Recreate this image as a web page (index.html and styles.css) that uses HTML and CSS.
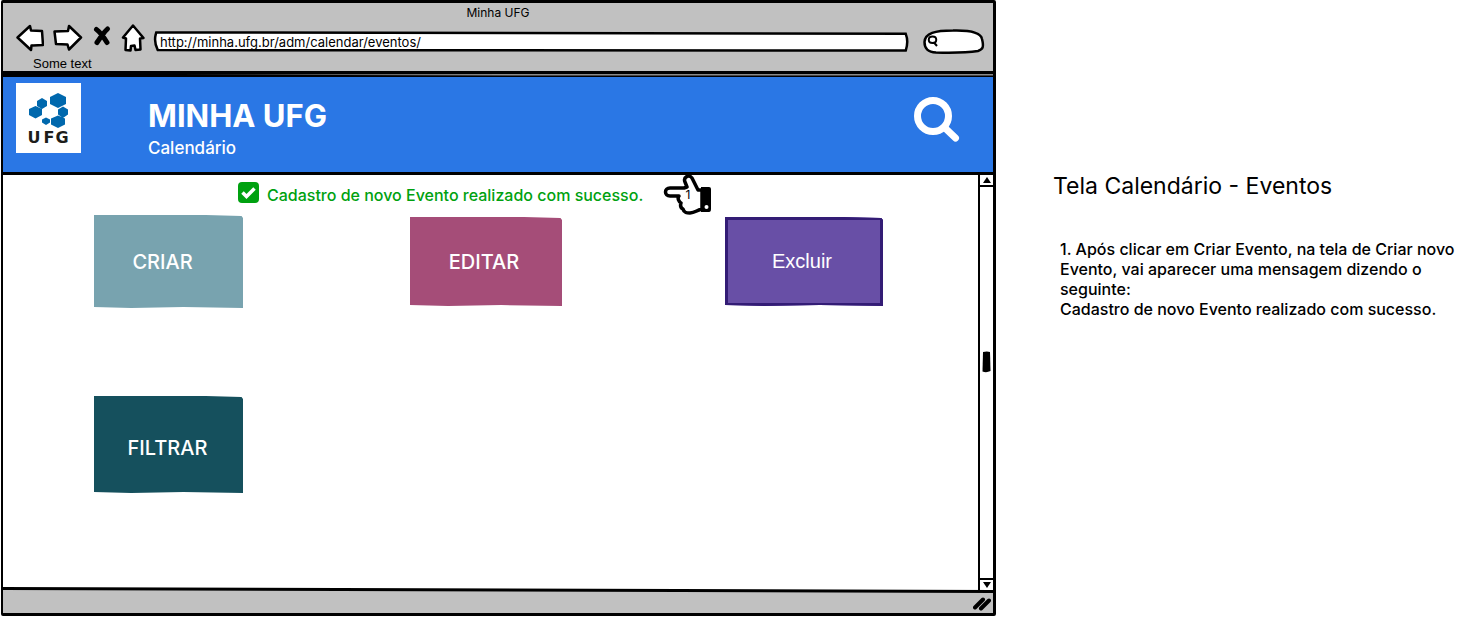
FILE: index.html
```html
<!DOCTYPE html>
<html lang="pt-BR">
<head>
<meta charset="utf-8">
<meta name="viewport" content="width=device-width, initial-scale=1">
<title>Minha UFG</title>
<link rel="stylesheet" href="styles.css">
</head>
<body>
<div class="page">
  <div class="browser">
    <div class="chrome">
      <div class="window-title">Minha UFG</div>
      <div class="toolbar">
        <div class="nav">
          <button class="nav-btn" aria-label="Voltar"><svg width="28" height="28" viewBox="0 0 28 28"><path d="M1.500 13.500 14 2l1 4.500 11 .500 1 14-11.500.500-.500 4.500z"/></svg></button>
          <button class="nav-btn" aria-label="Avançar"><svg width="30" height="28" viewBox="0 0 30 28"><path d="M1.500 7.500 15 7l1-5 12 11.500-12 12-1.500-5L3 20z"/></svg></button>
          <button class="nav-btn" aria-label="Parar"><svg class="cross" width="20" height="28" viewBox="0 0 20 28"><path d="M4.500 5.500c3 2 8 9 10.500 13M15.500 5C11 9 9 13 5 18.500"/></svg></button>
          <button class="nav-btn" aria-label="Início"><svg width="24" height="28" viewBox="0 0 24 28"><path d="M12 1.500 2 13.500l3 1-.500 11.500 5 .500.500-4.500 3.500-.500 1 4.500 5-.500-.500-11 3.500-.500z"/></svg></button>
        </div>
        <div class="address">
          <svg class="outline" viewBox="0 0 100 22" preserveAspectRatio="none" aria-hidden="true"><path d="M.300 1.500 99.700 3 Q100.100 11 99.700 20.500L.500 20Q-.100 11 .300 1.500z"/></svg>
          <input type="text" aria-label="Endereço" value="http://minha.ufg.br/adm/calendar/eventos/">
        </div>
        <div class="finder">
          <svg class="outline" viewBox="0 0 62 25" preserveAspectRatio="none" aria-hidden="true"><path d="M1.500 13C2 4 12 1.500 30 1.500 50 1 58 4 59 10 61 18 60 20.500 55 22 42 24 32 24 13 23.500 5 23 1.500 20 1.500 13z"/></svg>
          <svg class="lens" width="12" height="12" viewBox="0 0 12 12" aria-hidden="true"><path d="M5.500 1.500c-5 0-5 6.500 0 6.500s5-6.500 0-6.500M7 7.500l3 3.500"/></svg>
          <input type="search" aria-label="Pesquisar">
        </div>
      </div>
      <div class="bookmarks">Some text</div>
    </div>
    <svg class="rule" viewBox="0 0 990 6" preserveAspectRatio="none" aria-hidden="true"><path d="M0 0H990V6H0z"/><path class="gap" d="M175 3.500 550 3H990V4.500H550z"/></svg>
    <header class="banner">
      <svg class="logo" width="65" height="70" viewBox="0 0 65 70" role="img" aria-label="UFG">
        <path fill="#fff" d="M0 0h65v70H0z"/>
        <g fill="#0068ad"><path d="m42 10 8 4v7l-8 4-8-4v-7zM26 15l5 3v5l-5 3-5-3v-5zM19.500 23l6.500 3v6l-6.500 3.500-6.500-3.500v-6zM47 23.500l5 3v5L47 35l-5-3.500v-5zM42 32.500l7 3v6L42 45l-7-3.500v-6zM30 34.500l4 2v3L30 42l-4-2.500v-3z"/></g>
        <g text-anchor="middle"><text x="18" y="60">U</text><text x="33" y="60">F</text><text x="46" y="60">G</text></g>
      </svg>
      <div class="heading">
        <h1>MINHA UFG</h1>
        <p>Calendário</p>
      </div>
      <button class="search" aria-label="Buscar"><svg width="46" height="46" viewBox="0 0 46 46"><circle cx="19" cy="19" r="15.500"/><path d="m31 31 10.500 10"/></svg></button>
    </header>
    <div class="viewport">
      <main class="content">
        <div class="status" role="status">
          <svg class="check" width="21" height="21" viewBox="0 0 21 21" aria-hidden="true"><rect width="21" height="21" rx="4" fill="#00a110"/><path d="m4.500 10.500 4 4 8-8" fill="none" stroke="#fff" stroke-width="3.500"/></svg>
          <span class="message">Cadastro de novo Evento realizado com sucesso.</span>
          <span class="hand">
            <svg width="50" height="42" viewBox="0 0 50 42" aria-hidden="true"><path class="palm" d="M21 14H7c-6 0-6 8 0 8h9c-2 2 0 6 2 7-1 3 0 5 2 6 1 4 4 4 7 4 5 0 7-3 12-4V16h-4L29 4c-3-4-9-1-7 4l2 5z"/><path d="M38 13h8q2 0 2 2v20q0 3-2 3h-8z"/><circle cx="43.500" cy="33" r="2" fill="#fff"/></svg>
            <span class="step">1</span>
          </span>
        </div>
        <div class="actions">
          <button class="tile create">CRIAR</button>
          <button class="tile edit">EDITAR</button>
          <button class="tile delete">Excluir</button>
          <button class="tile filter">FILTRAR</button>
        </div>
      </main>
      <div class="scrollbar">
        <button class="step-btn up" aria-label="Rolar para cima"><svg width="8" height="6" viewBox="0 0 8 6"><path d="M4 0 8 6H0z"/></svg></button>
        <div class="track"><svg width="9" height="22" viewBox="0 0 9 22"><path d="M1 1q4-1 7 0l.500 19q-4 2-8 .500z"/></svg></div>
        <button class="step-btn down" aria-label="Rolar para baixo"><svg width="8" height="6" viewBox="0 0 8 6"><path d="M0 0h8L4 6z"/></svg></button>
      </div>
    </div>
    <footer class="statusbar">
      <svg class="slope" viewBox="0 0 990 6" preserveAspectRatio="none" aria-hidden="true"><path fill="#fff" d="M0 0h990v4L0 1z"/><path d="M0 0 990 3v3L0 3z"/></svg>
      <svg class="grip" width="18" height="14" viewBox="0 0 18 14" aria-hidden="true"><path d="M2 10.500 10 2.500M8 11.500l8-8"/></svg>
    </footer>
  </div>
  <aside class="notes">
    <h2>Tela Calendário - Eventos</h2>
    <p>1. Após clicar em Criar Evento, na tela de Criar novo<br>Evento, vai aparecer uma mensagem dizendo o<br>seguinte:<br>Cadastro de novo Evento realizado com sucesso.</p>
  </aside>
</div>
</body>
</html>
```
FILE: styles.css
```css
* { box-sizing: border-box; }
body {
  margin: 0;
  background: #fff;
  color: #000;
  font-family: Inter, "Liberation Sans", sans-serif;
  font-size: 16px;
}
h1, h2, p { margin: 0; }
svg { display: block; flex: none; }
button {
  padding: 0;
  border: 0;
  background: none;
  color: inherit;
  font: inherit;
}
.page {
  display: grid;
  grid-template-columns: 996fr 477fr;
  min-height: 100vh;
}
.browser {
  display: flex;
  flex-direction: column;
  margin: 0 0 1px 1px;
  border: 3px solid #000;
  border-left-width: 2px;
  border-radius: 2px;
}
.chrome { background: #c1c1c1; }
.window-title {
  font-size: 12px;
  line-height: 20px;
  text-align: center;
}
.toolbar {
  display: flex;
  align-items: center;
  height: 30px;
  padding: 0 8px 0 13px;
}
.nav {
  display: flex;
  align-items: center;
  gap: 9px;
  margin-right: 9px;
}
.nav-btn path {
  fill: #fff;
  stroke: #000;
  stroke-width: 2.5;
  stroke-linejoin: round;
}
.nav-btn .cross path {
  fill: none;
  stroke-width: 5;
  stroke-linecap: round;
}
.address {
  position: relative;
  flex: 1;
  margin: 7px 15px 0 0;
}
.finder {
  position: relative;
  display: flex;
  align-items: center;
  width: 62px;
  height: 25px;
  margin-top: 6px;
  padding-left: 4px;
}
.outline {
  position: absolute;
  inset: 0;
  width: 100%;
  height: 100%;
  overflow: visible;
}
.outline path {
  fill: #fff;
  stroke: #000;
  stroke-width: 2.5;
  vector-effect: non-scaling-stroke;
}
.address input, .finder input {
  position: relative;
  width: 100%;
  min-width: 0;
  border: 0;
  background: none;
  font: inherit;
}
.address input {
  display: block;
  height: 21px;
  padding: 0 6px;
  font-size: 13px;
}
.finder input { height: 20px; }
.lens { position: relative; }
.lens path {
  fill: none;
  stroke: #000;
  stroke-width: 2;
}
.bookmarks {
  padding: 3px 30px 0;
  font: 13px/15px "Liberation Sans", sans-serif;
}
.rule { width: 100%; height: 6px; }
.rule .gap { fill: #8b8b8b; }
.banner {
  display: flex;
  align-items: flex-start;
  min-height: 98px;
  padding: 6px 33px 0 13px;
  border-bottom: 3px solid #000;
  background: #2a77e5;
  color: #fff;
}
.logo text {
  font: bold 16px "DejaVu Sans", sans-serif;
  fill: #1d1d1b;
}
.heading {
  flex: 1;
  margin-left: 67px;
  padding-top: 13px;
}
.heading h1 {
  font-size: 31px;
  font-weight: 700;
  line-height: 40px;
}
.heading p {
  font-size: 17px;
  font-weight: 500;
  line-height: 24px;
}
.search { margin-top: 14px; }
.search svg {
  fill: none;
  stroke: #fff;
  stroke-width: 7;
  stroke-linecap: round;
}
.viewport {
  display: flex;
  flex: 1;
}
.content { flex: 1; }
.status {
  display: flex;
  align-items: center;
  height: 40px;
  padding-left: 235px;
  color: #00a110;
}
.check { margin-bottom: 6px; }
.message {
  flex: none;
  min-width: 381px;
  margin: 0 15px 0 8px;
  font-weight: 500;
  line-height: 20px;
}
.hand {
  position: relative;
  color: #000;
}
.hand .palm {
  fill: #fff;
  stroke: #000;
  stroke-width: 3.5;
  stroke-linejoin: round;
}
.step {
  position: absolute;
  inset: 0;
  font-size: 12px;
  line-height: 42px;
  text-align: center;
}
.actions {
  display: grid;
  grid-template-columns: 316fr 315fr 253fr;
  align-items: center;
  justify-items: start;
  row-gap: 88px;
  padding-left: 91px;
}
.tile {
  color: #fff;
  font-size: 20px;
  font-weight: 500;
  clip-path: polygon(0 0, 75% 0, 99% 1px, 100% 3px, 100% 100%, 60% 99%, 25% 100%, 0 99%);
}
.create {
  width: 149px;
  height: 93px;
  padding-right: 12px;
  background: #78a3af;
}
.edit {
  width: 152px;
  height: 89px;
  padding-right: 4px;
  background: #a54d78;
}
.delete {
  width: 158px;
  height: 89px;
  padding-right: 4px;
  border: 3px solid #331c75;
  background: #684fa6;
  font-family: "Liberation Sans", sans-serif;
  font-weight: 400;
}
.filter {
  width: 149px;
  height: 97px;
  padding: 6px 2px 0 0;
  background: #15505d;
}
.scrollbar {
  position: relative;
  display: flex;
  flex-direction: column;
  width: 15px;
  margin-bottom: -3px;
  border-left: 2px solid #000;
}
.step-btn {
  display: grid;
  place-items: center;
  height: 12px;
}
.up { border-bottom: 2px solid #000; }
.down { border-top: 2px solid #000; }
.track {
  display: grid;
  flex: 1;
  place-items: center;
  padding-bottom: 42px;
}
.statusbar {
  display: flex;
  flex-direction: column;
  align-items: flex-end;
  gap: 4px;
  height: 26px;
  background: #c1c1c1;
}
.slope { width: 100%; height: 6px; }
.grip { margin-right: 2px; }
.grip path {
  stroke: #000;
  stroke-width: 4;
  stroke-linecap: round;
}
.notes { padding: 171px 0 0 57px; }
.notes h2 {
  font-size: 23px;
  font-weight: 400;
  line-height: 30px;
}
.notes p {
  margin: 38px 0 0 7px;
  font-size: 16px;
  font-weight: 500;
  line-height: 20px;
  white-space: nowrap;
}
```
